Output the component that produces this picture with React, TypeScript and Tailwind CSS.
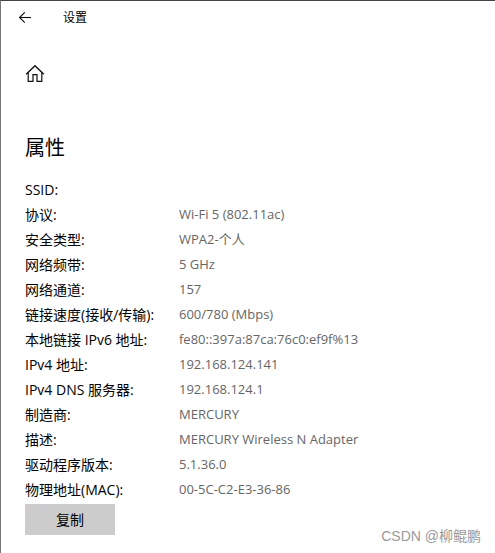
import React from 'react';

interface PropertyItem {
  label: string;
  value?: string;
}

const properties: PropertyItem[] = [
  { label: 'SSID:' },
  { label: '协议:', value: 'Wi-Fi 5 (802.11ac)' },
  { label: '安全类型:', value: 'WPA2-个人' },
  { label: '网络频带:', value: '5 GHz' },
  { label: '网络通道:', value: '157' },
  { label: '链接速度(接收/传输):', value: '600/780 (Mbps)' },
  { label: '本地链接 IPv6 地址:', value: 'fe80::397a:87ca:76c0:ef9f%13' },
  { label: 'IPv4 地址:', value: '192.168.124.141' },
  { label: 'IPv4 DNS 服务器:', value: '192.168.124.1' },
  { label: '制造商:', value: 'MERCURY' },
  { label: '描述:', value: 'MERCURY Wireless N Adapter' },
  { label: '驱动程序版本:', value: '5.1.36.0' },
  { label: '物理地址(MAC):', value: '00-5C-C2-E3-36-86' },
];

function TitleBar() {
  return (
    <header className="flex h-[34px] items-center">
      <button type="button" aria-label="返回" className="-ml-3 flex h-8 w-6 items-center justify-center">
        <svg width="12" height="12" viewBox="0 0 12 12" fill="none" stroke="#111" strokeWidth="1.1">
          <path d="M0.5 5.5H12" />
          <path d="M5.8 0.3L0.6 5.5L5.8 10.7" />
        </svg>
      </button>
      <span className="ml-[26px] text-xs">设置</span>
    </header>
  );
}

function HomeButton() {
  return (
    <button type="button" aria-label="主页" className="mt-[29px] flex h-5 w-5 items-center justify-center">
      <svg width="20" height="20" viewBox="0 0 20 20" fill="none" stroke="#111">
        <path d="M1.2 10.2L10 1.8L18.8 10.2" strokeWidth="1.4" />
        <path d="M3.2 8.5V17.4H8V10.6H12V17.4H16.8V8.5" strokeWidth="1.2" />
      </svg>
    </button>
  );
}

export default function App() {
  return (
    <div className="relative min-h-screen border-t border-l border-t-[#444] border-l-[#777] bg-white px-6 font-['Open_Sans','Noto_Sans_CJK_SC',sans-serif] text-black">
      <TitleBar />
      <main>
        <HomeButton />
        <h1 className="mt-[50px] text-xl leading-7">属性</h1>

        <dl className="mt-[15px] leading-[25px]">
          {properties.map((item) => (
            <div key={item.label} className="flex">
              <dt className="w-[154px] shrink-0 text-[14px] whitespace-nowrap">{item.label}</dt>
              <dd className="text-[13px] text-[#666]">{item.value}</dd>
            </div>
          ))}
        </dl>

        <button type="button" className="mt-0.5 h-[31px] w-[90px] bg-[#ccc] text-[14px]">
          复制
        </button>
      </main>

      {/* Watermark */}
      <span className="absolute right-3.5 bottom-[5px] font-['Liberation_Sans','Noto_Sans_CJK_SC',sans-serif] text-[14px] leading-6 text-[#999]">
        CSDN @柳鲲鹏
      </span>
    </div>
  );
}
